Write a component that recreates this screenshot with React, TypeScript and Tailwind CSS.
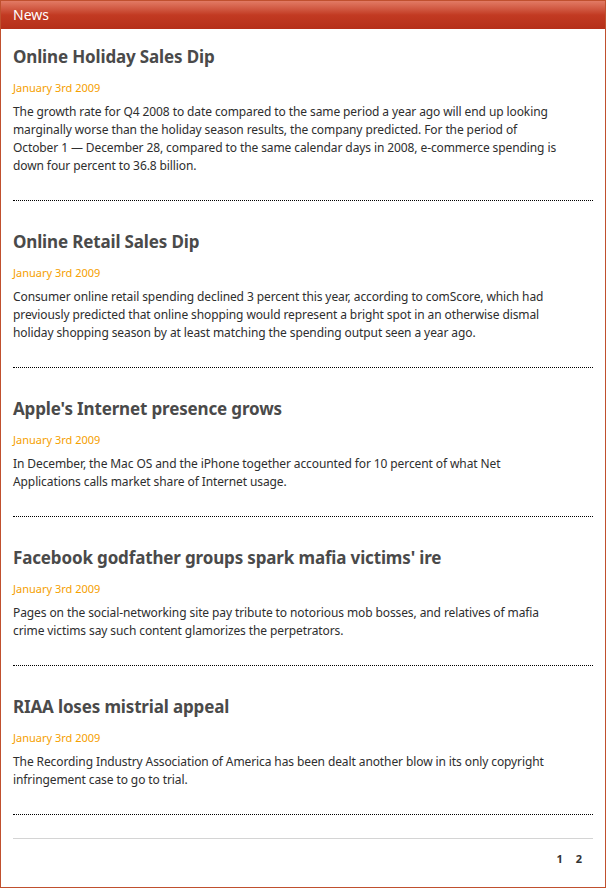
import React from "react";

interface Article {
  title: string;
  date: string;
  body: string;
}

const articles: Article[] = [
  {
    title: "Online Holiday Sales Dip",
    date: "January 3rd 2009",
    body: "The growth rate for Q4 2008 to date compared to the same period a year ago will end up looking marginally worse than the holiday season results, the company predicted. For the period of October 1 — December 28, compared to the same calendar days in 2008, e-commerce spending is down four percent to 36.8 billion.",
  },
  {
    title: "Online Retail Sales Dip",
    date: "January 3rd 2009",
    body: "Consumer online retail spending declined 3 percent this year, according to comScore, which had previously predicted that online shopping would represent a bright spot in an otherwise dismal holiday shopping season by at least matching the spending output seen a year ago.",
  },
  {
    title: "Apple's Internet presence grows",
    date: "January 3rd 2009",
    body: "In December, the Mac OS and the iPhone together accounted for 10 percent of what Net Applications calls market share of Internet usage.",
  },
  {
    title: "Facebook godfather groups spark mafia victims' ire",
    date: "January 3rd 2009",
    body: "Pages on the social-networking site pay tribute to notorious mob bosses, and relatives of mafia crime victims say such content glamorizes the perpetrators.",
  },
  {
    title: "RIAA loses mistrial appeal",
    date: "January 3rd 2009",
    body: "The Recording Industry Association of America has been dealt another blow in its only copyright infringement case to go to trial.",
  },
];

function NewsItem({ article, first }: { article: Article; first: boolean }) {
  return (
    <div className={`border-b border-dotted border-black pb-[25px] ${first ? "pt-[15px]" : "pt-[28px]"}`}>
      <h2 className="text-[17px] font-bold leading-[26px] tracking-[-0.15px] text-[#4a4a4a]">{article.title}</h2>
      <div className="mt-[11px] text-[11px] leading-[14px] text-[#f5a000]">{article.date}</div>
      <p className="mt-[8px] pr-[30px] text-[12px] leading-[18px] tracking-[-0.1px] text-[#2e2e2e]">{article.body}</p>
    </div>
  );
}

export default function App() {
  return (
    <div className="w-[606px] bg-white pb-[2px] font-['Noto_Sans',sans-serif]">
      <div className="border border-[#c0502e]">
        <div className="h-[28px] bg-gradient-to-b from-[#e27a64] via-[#c23a22] to-[#b52f19] px-[12px] text-[14px] leading-[28px] text-white">
          News
        </div>
        <div className="px-[12px]">
          {articles.map((a, i) => (
            <NewsItem key={i} article={a} first={i === 0} />
          ))}
          <div className="mt-[23px] h-[1px] bg-[#d4d4d4]" />
          <div className="flex justify-end gap-[13px] pt-[13px] pb-[21px] pr-[11px] text-[11px] leading-[14px] font-bold text-[#333]">
            <span>1</span>
            <span>2</span>
          </div>
        </div>
      </div>
    </div>
  );
}
